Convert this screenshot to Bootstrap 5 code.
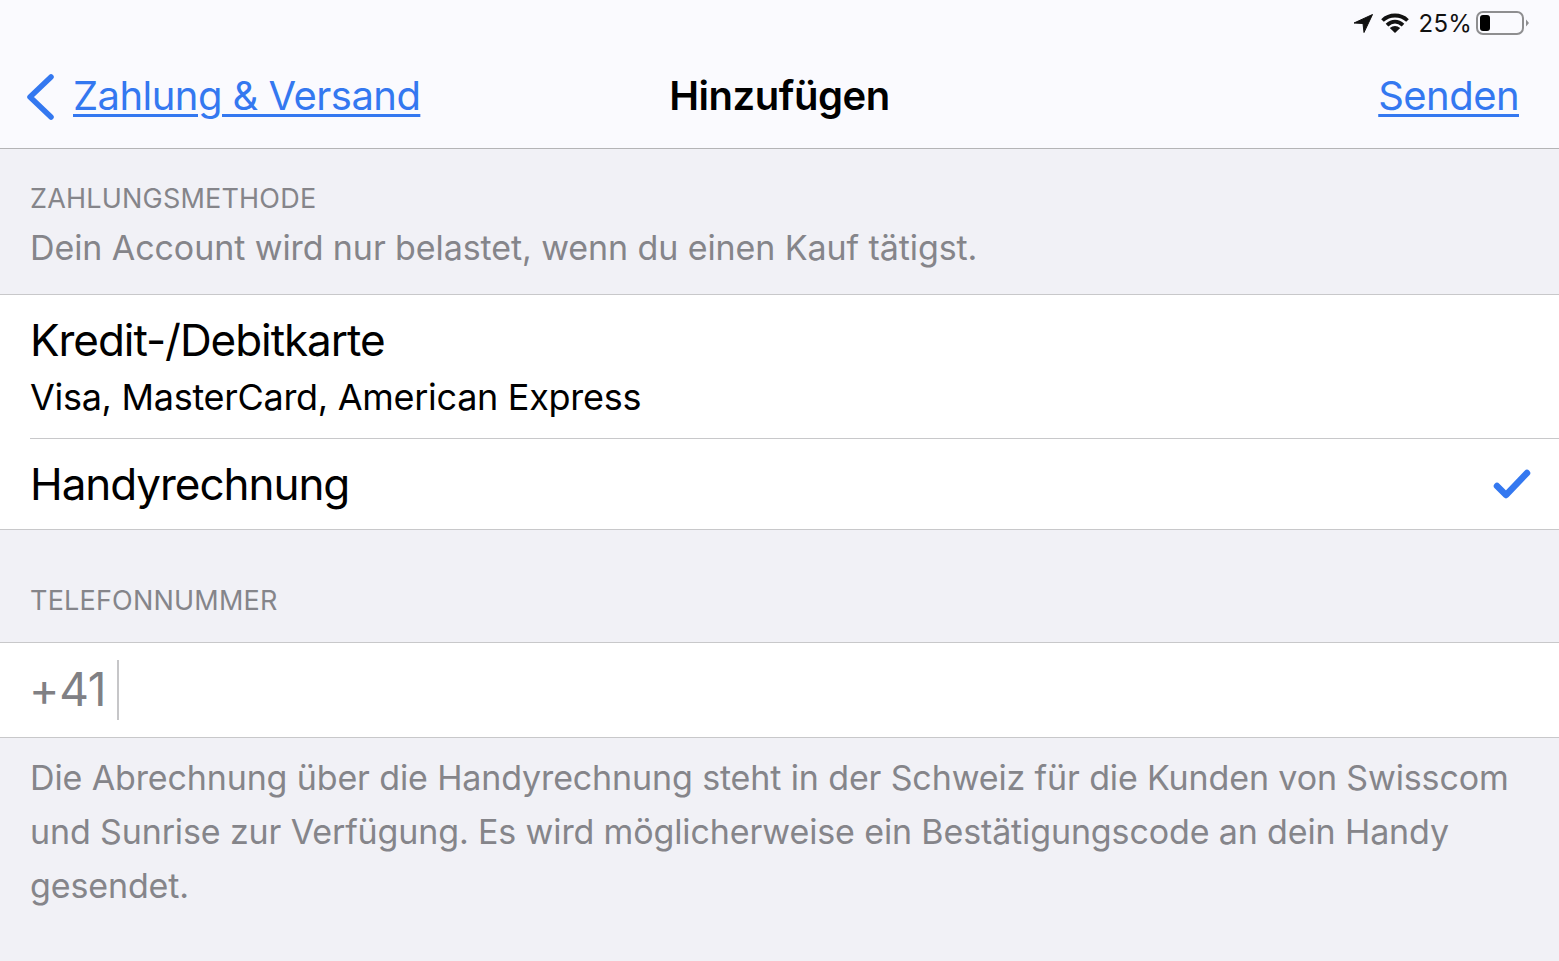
<!DOCTYPE html>
<html lang="de">
<head>
<meta charset="utf-8">
<title>Hinzufügen</title>
<link href="https://cdn.jsdelivr.net/npm/bootstrap@5.3.0/dist/css/bootstrap.min.css" rel="stylesheet">
<style>
html,body{height:100%;}
body{background:#f1f1f6;font-family:Inter,"Liberation Sans",sans-serif;overflow:hidden;color:#000;}
.top-area{height:149px;background:#fafafe;border-bottom:1px solid #b4b4b6;}
.status-strip{height:46px;padding-right:29px;font-size:24px;line-height:48px;color:#111;}
.status-pct{letter-spacing:.2px;margin:2px 0 0 2px;}
.nav-strip{height:102px;padding:0 40px 0 25px;position:relative;}
.back-chev{margin-right:18px;}
.nav-link-blue{color:#3478f0;font-size:40px;letter-spacing:-.55px;line-height:1;text-decoration:underline;text-decoration-thickness:3px;text-underline-offset:4px;margin-top:-2px;}
.nav-title{position:absolute;left:0;right:0;text-align:center;font-size:40px;font-weight:600;letter-spacing:-.45px;top:0;line-height:100px;}
.sec-head{font-size:27px;line-height:1;color:#85858a;letter-spacing:.2px;padding-left:30px;}
.sec-sub{font-size:34px;line-height:1;color:#85858a;letter-spacing:-.09px;padding-left:30px;margin-top:19px;}
.head-one{height:145px;padding-top:36px;}
.head-two{height:112px;padding-top:57px;}
.white-band{background:#fff;border-top:1px solid #c8c8ca;border-bottom:1px solid #c8c8ca;}
.pay-one{height:143px;padding:20px 0 0 30px;}
.pay-title{font-size:44px;line-height:50px;letter-spacing:-1.05px;}
.pay-sub{font-size:36px;line-height:44px;letter-spacing:-.29px;margin-top:10px;}
.pay-two{height:91px;margin-left:30px;border-top:1px solid #c8c8ca;padding-right:28px;}
.phone-band{height:96px;padding-left:29px;}
.phone-code{font-size:46px;color:#808084;letter-spacing:-.3px;line-height:1;margin-top:-2px;}
.phone-sep{width:2px;height:60px;background:#c6c6c8;margin-left:11px;}
.foot-note{font-size:34px;line-height:54px;color:#85858a;letter-spacing:-.13px;padding:13px 30px 0;}
</style>
</head>
<body>
<div class="top-area">
  <div class="status-strip d-flex justify-content-end align-items-center">
    <svg width="20" height="20" viewBox="0 0 20 20" class="me-2"><path d="M1 10 19.500 1.500 11 19.500 10 10.500Z" fill="#111" stroke="#111" stroke-linejoin="round"/></svg>
    <svg width="28" height="20" viewBox="0 0 28 20" class="me-2"><path d="M1.500 7.500C8.500 .8 19.500 .8 26.500 7.500M6 12.200C11 7.500 17 7.500 22 12.200" fill="none" stroke="#111" stroke-width="3.800"/><path d="M14 20 8.800 15Q14 11 19.200 15Z" fill="#111"/></svg>
    <span class="status-pct">25%</span>
    <svg width="54" height="26" viewBox="0 0 54 26" class="ms-1"><rect x="1" y="2" width="46" height="22" rx="6" fill="none" stroke="#8e8e90" stroke-width="2"/><rect x="4" y="5" width="10" height="16" rx="3" fill="#000"/><path d="M50 9.500 53 13 50 16.500Z" fill="#8e8e90"/></svg>
  </div>
  <div class="nav-strip d-flex justify-content-between align-items-center">
    <div class="nav-title">Hinzufügen</div>
    <div class="d-flex align-items-center">
      <svg width="30" height="48" viewBox="0 0 30 48" class="back-chev"><path d="M26 4 5 24 26 44" fill="none" stroke="#3478f0" stroke-width="5.500" stroke-linecap="round" stroke-linejoin="round"/></svg>
      <a class="nav-link-blue" href="#">Zahlung &amp; Versand</a>
    </div>
    <a class="nav-link-blue" href="#">Senden</a>
  </div>
</div>
<div class="head-one">
  <div class="sec-head">ZAHLUNGSMETHODE</div>
  <div class="sec-sub">Dein Account wird nur belastet, wenn du einen Kauf tätigst.</div>
</div>
<div class="white-band">
  <div class="pay-one">
    <div class="pay-title">Kredit-/Debitkarte</div>
    <div class="pay-sub">Visa, MasterCard, American Express</div>
  </div>
  <div class="pay-two d-flex justify-content-between align-items-center">
    <div class="pay-title">Handyrechnung</div>
    <svg width="38" height="32" viewBox="0 0 38 32"><path d="M4 18 13 27 34 5" fill="none" stroke="#3478f0" stroke-width="6.500" stroke-linecap="round" stroke-linejoin="round"/></svg>
  </div>
</div>
<div class="head-two">
  <div class="sec-head">TELEFONNUMMER</div>
</div>
<div class="white-band phone-band d-flex align-items-center">
  <span class="phone-code">+41</span><span class="phone-sep"></span>
</div>
<div class="foot-note">Die Abrechnung über die Handyrechnung steht in der Schweiz für die Kunden von Swisscom<br>und Sunrise zur Verfügung. Es wird möglicherweise ein Bestätigungscode an dein Handy<br>gesendet.</div>
</body>
</html>
